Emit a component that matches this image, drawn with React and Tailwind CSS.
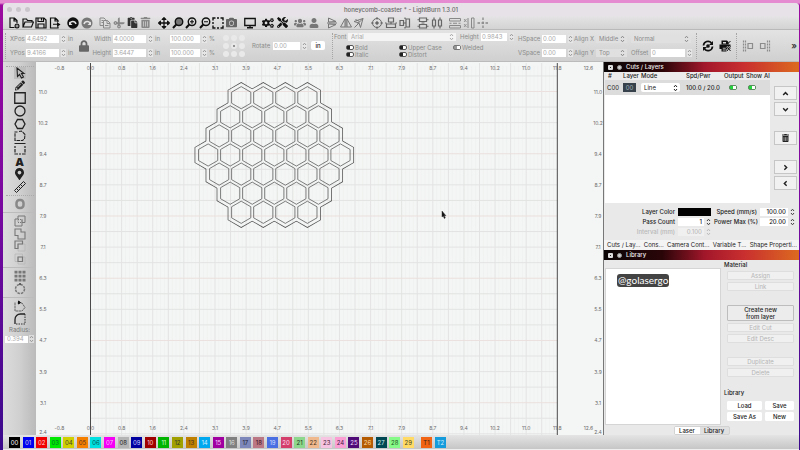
import clsx from 'clsx'
import {
  FaArrowsAlt, FaCamera, FaCogs, FaCut, FaLock, FaMapMarkerAlt, FaPaste,
  FaPencilAlt, FaTools, FaTrashAlt, FaUser, FaUsers,
} from 'react-icons/fa'

function Svg({ children, className, width = 2 }) {
  return (
    <svg viewBox="0 0 24 24" fill="none" stroke="currentColor" strokeWidth={width} className={clsx('block', className || 'w-3 h-3')} aria-hidden="true">
      {children}
    </svg>
  )
}

const NewIcon = () => <Svg width={2.4}><path d="M13 21H4V2h9l5 5v5M12 2v6h6" /><circle cx="18" cy="18" r="5" fill="currentColor" stroke="none" /><path d="M18 15v6M15 18h6" stroke="#e4e4e4" strokeWidth="1.6" /></Svg>
const OpenIcon = () => <Svg width={2.4}><path d="M2 20V4h7l2 3h9v3M2 20L6 10h17l-4 10z" /></Svg>
const SaveIcon = () => <Svg width={2.4}><path d="M2 2h16l4 4v16H2zM6 2v7h11V2M6 22v-8h12v8M13 3v4" /></Svg>
const ImportIcon = () => <Svg width={2.4}><path d="M18 10V7l-5-5H3v20h15v-3M12 2v6h6M8 14.500h9" /><path d="M16 10l7 5-7 5z" fill="currentColor" stroke="none" /></Svg>
const UndoIcon = () => <Svg><circle cx="12" cy="12" r="11.500" fill="currentColor" stroke="none" /><path d="M6 13c1-5 10-6 12 1" stroke="#e4e4e4" strokeWidth="3" /><path d="M4 9v7h7z" fill="#e4e4e4" stroke="none" /></Svg>
const RedoIcon = () => <Svg><circle cx="12" cy="12" r="11" fill="currentColor" stroke="none" /><path d="M18 13C17 8 8 7 6 14" stroke="#e4e4e4" strokeWidth="3" /><path d="M20 9v7h-7z" fill="#e4e4e4" stroke="none" /></Svg>
const CopyIcon = () => <Svg><path d="M9 17H2V2h8l3 3v3M9 7h8l5 5v10H9zM16 7v6h6M5 7h3M5 11h3M12 17h7" /></Svg>
const MoveIcon = () => <FaArrowsAlt className="w-3 h-3" />

function Magnifier({ sign, dark }) {
  return (
    <Svg width={2.8}>
      <circle cx="14" cy="9.500" r="7.500" fill={dark ? '#777' : 'none'} />
      <path d="M8.500 15L2 22" strokeWidth="4" />
      {sign && <path d={sign} strokeWidth="2.400" />}
    </Svg>
  )
}

const FrameIcon = () => <Svg width={2.8}><path d="M2 7V2h5M17 2h5v5M22 17v5h-5M7 22H2v-5M10 2h4M10 22h4M2 10v4M22 10v4" /></Svg>
const MonitorIcon = () => <Svg width={2.6}><path d="M1.500 3h21v14h-21zM12 17v5M6 21.500h12" /></Svg>
const FlipVIcon = () => <Svg><path d="M5 2v8l15-1zM5 22v-8l15 1zM2 12h20" /></Svg>
const FlipHIcon = () => <Svg><path d="M10 4v16H1zM14 4v16h9zM12 2v20" /></Svg>
const MirrorIcon = () => <Svg><path d="M2 9l18-6-5 18-3-9zM12 12L3 21M5 5l8 4M20 3L9 14" /></Svg>
const TargetIcon = () => <Svg><circle cx="12" cy="12" r="9" /><circle cx="12" cy="12" r="2.500" fill="currentColor" /><path d="M12 0v5M12 19v5M0 12h5M19 12h5" /></Svg>
const AlignVIcon = () => <Svg width={2.4}><path d="M7 2h10v8H7zM3 14h18v7H3zM12 10v4M0 12h3M21 12h3" /></Svg>
const AlignHIcon = () => <Svg width={2.4}><path d="M2 7h7v10H2zM14 4h7v16h-7zM9 12h5M12 1v3M12 20v3" /></Svg>
const DistVIcon = () => <Svg width={2.4}><path d="M5 2h14v7H5zM5 15h14v7H5zM1 5.500h4M19 5.500h4M1 18.500h4M19 18.500h4M9 12h6" /></Svg>
const DistHIcon = () => <Svg width={2.4}><path d="M3 6h6v12H3zM15 6h6v12h-6zM6 1v5M6 18v5M18 1v5M18 18v5" /></Svg>
const SpreadVIcon = () => <Svg><path d="M1 3h22v5H1zM1 17h22v5H1zM1 12.500h4M8 12.500h8M19 12.500h4" /></Svg>
const SpreadHIcon = () => <Svg><path d="M17 2h5v20h-5zM10 2v20" /><path d="M2 4l5 6M7 4l-5 6M2 14l5 6M7 14l-5 6" strokeWidth="1.600" /></Svg>
const CrossIcon = () => <Svg width={2.6}><path d="M12 1v22M1 12h22" strokeDasharray="5 3" /></Svg>

const toolbarGroups = [
  { width: 'w-[53px]', icons: [['New', NewIcon], ['Open', OpenIcon], ['Save', SaveIcon], ['Import', ImportIcon]] },
  { width: 'w-[26px]', icons: [['Undo', UndoIcon], ['Redo', RedoIcon, 'text-[#777]']] },
  {
    width: 'w-[53px]',
    icons: [
      ['Copy', CopyIcon, 'text-[#888]'],
      ['Cut', () => <FaCut className="w-[10px] h-[10px] -rotate-45" />, 'text-[#888]'],
      ['Paste', () => <FaPaste className="w-[11px] h-[11px]" />, 'text-[#333]'],
      ['Delete', () => <FaTrashAlt className="w-[11px] h-[11px]" />, 'text-[#888]'],
    ],
  },
  {
    width: 'w-[80px]',
    icons: [
      ['Pan', MoveIcon],
      ['Zoom to page', () => <Magnifier dark />],
      ['Zoom in', () => <Magnifier sign="M10 9.500h8M14 5.500v8" />],
      ['Zoom out', () => <Magnifier sign="M10 9.500h8" />],
      ['Frame selection', FrameIcon],
      ['Camera', () => <FaCamera className="w-[11px] h-[11px]" />, 'text-[#666]'],
    ],
  },
  { width: 'w-3', icons: [['Preview', MonitorIcon]] },
  {
    width: 'w-[26px]',
    icons: [
      ['Settings', () => <FaCogs className="w-3 h-3" />],
      ['Device settings', () => <FaTools className="w-[11px] h-[11px]" />],
    ],
  },
  {
    width: 'w-[26px]',
    icons: [
      ['Group', () => <FaUsers className="w-3 h-3" />, 'text-[#777]'],
      ['Ungroup', () => <FaUser className="w-[10px] h-[10px]" />, 'text-[#777]'],
    ],
  },
  { width: 'w-[39px]', icons: [['Flip vertical', FlipVIcon, 'text-[#777]'], ['Flip horizontal', FlipHIcon, 'text-[#777]'], ['Mirror', MirrorIcon, 'text-[#777]']] },
  { width: 'w-[40px]', icons: [['Center', TargetIcon, 'text-[#666]'], ['Align vertical', AlignVIcon, 'text-[#666]'], ['Align horizontal', AlignHIcon, 'text-[#666]']] },
  { width: 'w-[26px]', icons: [['Distribute vertical', DistVIcon, 'text-[#666]'], ['Distribute horizontal', DistHIcon, 'text-[#666]']] },
  { width: 'w-[40px]', icons: [['Space vertical', SpreadVIcon, 'text-[#888]'], ['Space horizontal', SpreadHIcon, 'text-[#888]'], ['Move together', CrossIcon, 'text-[#888]']] },
]

function IconButton({ label, className, children }) {
  return (
    <button type="button" aria-label={label} className={clsx('flex items-center justify-center w-3 h-3 shrink-0', className)}>
      {children}
    </button>
  )
}

function Toolbar() {
  return (
    <div className="flex items-center gap-[6px] h-[14px] shrink-0 pl-[5px] bg-gradient-to-b from-[#e6e4e6] to-[#d2d3d2] border-b border-[#b9b9b9]">
      {toolbarGroups.map((group, i) => (
        <div key={i} className={clsx('flex justify-between shrink-0', group.width)}>
          {group.icons.map(([label, Icon, color]) => (
            <IconButton key={label} label={label} className={color || 'text-[#111]'}><Icon /></IconButton>
          ))}
        </div>
      ))}
    </div>
  )
}

function Stepper({ className }) {
  return (
    <svg viewBox="0 0 5 8" fill="none" stroke="currentColor" strokeWidth="1" className={clsx('w-[5px] h-2 shrink-0', className)} aria-hidden="true">
      <path d="M1 3l1.500-1.800L4 3M1 5l1.500 1.800L4 5" />
    </svg>
  )
}

function Field({ label, value, unit, labelClass, inputClass, name }) {
  return (
    <label className="flex items-center gap-[2px] h-2 shrink-0">
      {label && <span className={clsx('shrink-0 whitespace-nowrap', labelClass)}>{label}</span>}
      <input aria-label={name} defaultValue={value} className={clsx('h-2 px-px bg-white text-[#a9a9a9] outline-none', inputClass)} />
      <Stepper className="text-[#999] bg-[#e6e6e6]" />
      {unit && <span className="w-[7px]">{unit}</span>}
    </label>
  )
}

function Picker({ label, name, value, labelClass, boxClass }) {
  return (
    <label className="flex items-center gap-[2px] shrink-0">
      {label && <span className={clsx('shrink-0 whitespace-nowrap', labelClass)}>{label}</span>}
      <span className={clsx('relative flex items-center', boxClass)}>
        <select aria-label={name || label} defaultValue={value} className="appearance-none w-full h-full pl-[3px] pr-2 rounded-[2px] bg-transparent outline-none">
          <option>{value}</option>
        </select>
        <Stepper className="absolute right-[2px] pointer-events-none" />
      </span>
    </label>
  )
}

function Toggle({ label, on, active }) {
  return (
    <label className="flex items-center gap-px h-[7px] whitespace-nowrap">
      <input type="checkbox" defaultChecked={on} aria-label={label} className="sr-only" />
      <span className={clsx('flex w-2 h-[5px] rounded-[2px] border', active ? 'justify-end bg-[#22d63c] border-[#5a8a5e]' : on ? 'justify-end bg-[#999] border-[#777]' : 'bg-white border-[#555]')}>
        <span className={clsx('w-[3px] h-full', active || on ? 'bg-white' : 'bg-[#222]')} />
      </span>
      {!active && label}
    </label>
  )
}

const Dots = () => <div className="w-px h-[26px] border-l border-dotted border-[#a5a5a5] shrink-0" />

function AnchorGrid() {
  return (
    <div role="radiogroup" aria-label="Anchor" className="grid grid-cols-3 gap-[2px] shrink-0">
      {Array.from({ length: 9 }, (_, i) => (
        <input key={i} type="radio" name="anchor" aria-label={`Anchor ${i + 1}`} defaultChecked={i === 4} className="appearance-none w-[6px] h-[6px] rounded-full bg-[#e9e9e9] checked:border-2 checked:border-[#e9e9e9] checked:bg-[#777]" />
      ))}
    </div>
  )
}

function PropertiesBar() {
  return (
    <div className="flex items-center h-8 shrink-0 px-[2px] overflow-hidden bg-gradient-to-b from-[#e2e3e2] to-[#cfd0cf] text-[#8b8b8b] border-b border-[#bbb]">
      <Dots />
      <div className="flex flex-col gap-[6px] ml-1">
        <Field label="XPos" value="4.6492" unit="in" labelClass="w-[14px]" inputClass="w-[33px]" />
        <Field label="YPos" value="9.4166" unit="in" labelClass="w-[14px]" inputClass="w-[33px]" />
      </div>
      <FaLock className="w-[10px] h-3 ml-1 mr-[2px] text-[#666] shrink-0" />
      <div className="flex flex-col gap-[6px]">
        <Field label="Width" value="4.0000" unit="in" labelClass="w-[20px] text-right" inputClass="w-[33px]" />
        <Field label="Height" value="3.6447" unit="in" labelClass="w-[20px] text-right" inputClass="w-[33px]" />
      </div>
      <div className="flex flex-col gap-[6px] ml-2">
        <Field name="Width percent" value="100.000" unit="%" inputClass="w-[30px]" />
        <Field name="Height percent" value="100.000" unit="%" inputClass="w-[30px]" />
      </div>
      <div className="ml-[7px]"><AnchorGrid /></div>
      <div className="ml-[7px]">
        <Field label="Rotate" value="0.00" labelClass="w-[19px]" inputClass="w-[27px]" />
      </div>
      <button type="button" className="w-[14px] h-[9px] ml-1 rounded-[2px] bg-white text-[#222] font-medium shrink-0">in</button>
      <div className="ml-[7px]"><Dots /></div>
      <div className="flex flex-col ml-px shrink-0">
        <div className="flex items-center gap-1">
          <Picker label="Font" value="Arial" labelClass="w-3" boxClass="w-[108px] h-2 bg-[#f4f4f4] text-[#a9a9a9]" />
          <Field label="Height" value="0.9843" labelClass="w-[19px]" inputClass="w-[26px]" />
        </div>
        <div className="grid grid-cols-[53px_54px_auto] ml-3 mt-[3px]">
          <Toggle label="Bold" />
          <Toggle label="Upper Case" />
          <Toggle label="Welded" on />
          <Toggle label="Italic" />
          <Toggle label="Distort" />
        </div>
      </div>
      <div className="flex flex-col gap-[6px] ml-1">
        <Field label="HSpace" value="0.00" labelClass="w-[22px] text-right" inputClass="w-[24px]" />
        <Field label="VSpace" value="0.00" labelClass="w-[22px] text-right" inputClass="w-[24px]" />
      </div>
      <div className="flex flex-col gap-[6px] ml-px">
        <Picker label="Align X" value="Middle" labelClass="w-[20px]" boxClass="w-[31px] h-2 bg-[#e0e0e0]" />
        <Picker label="Align Y" value="Top" labelClass="w-[20px]" boxClass="w-[31px] h-2 bg-[#e0e0e0]" />
      </div>
      <div className="flex flex-col gap-[6px] ml-1">
        <Picker name="Text mode" value="Normal" boxClass="w-[60px] h-2 bg-[#e0e0e0]" />
        <Field label="Offset" value="0" labelClass="w-[18px]" inputClass="w-[34px]" />
      </div>
      <div className="flex items-center gap-[5px] ml-1 text-[#111]">
        <Dots />
        <IconButton label="Refresh">
          <Svg width={3.4}><path d="M3 11a9 9 0 0116-5M21 13a9 9 0 01-16 5" /><path d="M22 2v8h-8zM2 22v-8h8z" fill="currentColor" stroke="none" /><circle cx="12" cy="12" r="2" fill="currentColor" /></Svg>
        </IconButton>
        <IconButton label="Laser print">
          <Svg><path d="M5 1h11l3 3v5H5z" fill="currentColor" stroke="none" /><path d="M8 4h6v3H8z" fill="#ddd" stroke="none" /><path d="M1 9h22v9H1z" fill="currentColor" stroke="none" /><path d="M5 14h10v9H5z" fill="currentColor" stroke="none" /><path d="M7.500 16.500h6M7.500 20h6" stroke="#ddd" strokeWidth="1.600" /><path d="M16 13l7 9M23 13l-7 9" stroke="#ddd" strokeWidth="4" /><path d="M16 13l7 9M23 13l-7 9M17 8l6-6" /></Svg>
        </IconButton>
        <Dots />
        <IconButton label="Dock left" className="text-[#8c8c8c]"><Svg width={2.4}><path d="M3 1v22M7 1v22" strokeDasharray="4 2" /><path d="M12 7h9v10h-9z" /></Svg></IconButton>
        <IconButton label="Dock right" className="text-[#8c8c8c]"><Svg width={2.4}><path d="M21 1v22M17 1v22" strokeDasharray="4 2" /><path d="M3 7h9v10H3z" /></Svg></IconButton>
      </div>
      <button type="button" aria-label="More" className="ml-auto text-[9px] leading-[9px] font-semibold text-[#333]">»</button>
    </div>
  )
}

const drawTools = [
  ['Select', <Svg width={2.2}><path d="M0 0h24v24H0z" fill="#bdbdbd" stroke="none" /><path d="M6 2l1 17 4-4 4 7 4-2-4-7h5z" /></Svg>],
  ['Draw lines', <FaPencilAlt className="w-[10px] h-[11px]" />],
  ['Rectangle', <Svg width={2.6}><path d="M1.500 1.500h21v21h-21z" /></Svg>],
  ['Ellipse', <Svg width={2.6}><circle cx="12" cy="12" r="10" /></Svg>],
  ['Polygon', <Svg width={2.6}><path d="M7 3h10l5 9-5 9H7l-5-9z" /></Svg>],
  ['Edit nodes', <Svg width={2.2}><path d="M2 22V4h5M10 3l5-1 7 7-1 9-4 3H2" strokeDasharray="7 1.500" /></Svg>],
  ['Tabs', <Svg width={2.4}><path d="M1 1h22" /><path d="M8 22H2V6M16 22h6V6M10 22h4" strokeDasharray="7 2" /></Svg>],
  ['Text', <span className="font-black text-[11px] leading-[12px]">A</span>],
  ['Position laser', <FaMapMarkerAlt className="w-[9px] h-3" />],
  ['Measure', <Svg width={2}><path d="M1 19L19 1l4 4L5 23zM6 18l2-2M10 14l2-2M14 10l2-2" /></Svg>],
]

const boolTools = [
  ['Weld', <Svg><path d="M8 8V2h14v13h-6v7H2V8zM16 9v6" /><path d="M8 9h8v6H8z" strokeDasharray="2 2" /></Svg>],
  ['Union', <Svg width={2.2}><path d="M2 2h12v6h8v14H8v-7H2z" /></Svg>],
  ['Subtract', <Svg width={2.4}><path d="M8 8h14v14H8z" stroke="#b5b5b5" strokeWidth="1.500" /><path d="M2 2h15v6H8v9H2z" /></Svg>],
  ['Intersection', <Svg width={2.4}><path d="M2 2h15v15H2zM8 8h14v14H8z" stroke="#b5b5b5" strokeWidth="1.500" /><path d="M8 8h9v9H8z" /></Svg>],
]

const Rule = () => <div className="w-full h-px bg-[#bcbcbc]" />

function ToolColumn() {
  return (
    <div className="flex flex-col items-center w-[33px] shrink-0 text-[#222] bg-gradient-to-r from-[#dcdcdc] via-[#d0d0d0] to-[#bababa]">
      <div className="w-7 mt-1 border-t border-dotted border-[#aaa]" />
      <div className="flex flex-col justify-between h-[126px]">
        {drawTools.map(([label, icon]) => <IconButton key={label} label={label}>{icon}</IconButton>)}
      </div>
      <div className="w-7 my-[2px] border-t border-dotted border-[#aaa]" />
      <IconButton label="Offset" className="text-[#888]">
        <Svg width={5}><rect x="5" y="4" width="14" height="16" rx="6" /></Svg>
      </IconButton>
      <div className="w-full mt-[2px]"><Rule /></div>
      <div className="flex flex-col justify-between h-[50px] my-[2px] text-[#777]">
        {boolTools.map(([label, icon]) => <IconButton key={label} label={label}>{icon}</IconButton>)}
      </div>
      <Rule />
      <div className="flex flex-col gap-px my-[2px] text-[#777]">
        <IconButton label="Grid array">
          <Svg><path d="M1 4h22M1 12h22M1 20h22" strokeWidth="5.500" strokeDasharray="6 2" /></Svg>
        </IconButton>
        <IconButton label="Circular array">
          <Svg width={3}><circle cx="12" cy="12" r="9" strokeDasharray="5 2" /><path d="M12 0v4" stroke="#444" /></Svg>
        </IconButton>
      </div>
      <Rule />
      <div className="flex flex-col gap-px mt-[2px]">
        <IconButton label="Start point" className="text-[#666]">
          <Svg><path d="M2 5v17h14l6-7-6-9H6" strokeDasharray="5 1" /><path d="M9 2l4 3-4 3z" fill="#111" stroke="#111" /></Svg>
        </IconButton>
        <IconButton label="Round corners">
          <Svg width={2.6}><path d="M2 22V13C2 6 7 2 13 2h9" /><path d="M22 2v20H2" strokeDasharray="3 2" strokeWidth="1.800" /></Svg>
        </IconButton>
      </div>
      <label className="flex flex-col items-center w-full mt-px text-[#777]">
        <span className="h-[9px]">Radius:</span>
        <span className="flex items-center gap-px">
          <input defaultValue="0.394" className="w-[23px] h-[7px] px-[2px] bg-white text-[#aaa] outline-none" />
          <Stepper className="text-[#999] bg-[#ddd]" />
        </span>
      </label>
    </div>
  )
}

// Canvas geometry, in canvas units
const ORIGIN_X = 54.5
const CELL = 15.56
const BED_RIGHT = ORIGIN_X + CELL * 30
const FIRST_ROW = 29.5
const HEIGHT = 373

const xTicks = ['-0.8', '0.0', '0.8', '1.6', '2.4', '3.1', '3.9', '4.7', '5.5', '6.3', '7.1', '7.9', '8.7', '9.4', '10.2', '11.0', '11.8', '12.6']
const yTicks = ['11.0', '10.2', '9.4', '8.7', '7.9', '7.1', '6.3', '5.5', '4.7', '3.9', '3.1', '2.4']

function hexPoints(cx, cy, apothem) {
  const r = apothem / Math.cos(Math.PI / 6)
  return Array.from({ length: 6 }, (_, i) => {
    const a = Math.PI / 6 + (i * Math.PI) / 3
    return `${(cx + r * Math.cos(a)).toFixed(2)},${(cy + r * Math.sin(a)).toFixed(2)}`
  }).join(' ')
}

const cells = [4, 5, 6, 7, 6, 5, 4].flatMap((count, row) =>
  Array.from({ length: count }, (_, i) => [
    238.3 + (i - (count - 1) / 2) * 22.06,
    93 + (row - 3) * 19.1,
  ])
)

function Canvas() {
  return (
    <svg viewBox={`0 0 567 ${HEIGHT}`} preserveAspectRatio="xMinYMin slice" className="block flex-1 min-w-0 h-full bg-[#f4f6f5]" role="img" aria-label="Workspace">
      <g stroke="#eceeed" strokeWidth="1">
        {Array.from({ length: 30 }, (_, i) => [1, 2, 3].map(k => {
          const x = ORIGIN_X + CELL * (i + k / 4)
          return <line key={`${i}-${k}`} x1={x} x2={x} y1="4" y2={HEIGHT} opacity="0.5" />
        }))}
      </g>
      <g stroke="#e2e3e2" strokeWidth="1">
        {Array.from({ length: 29 }, (_, i) => {
          const x = ORIGIN_X + CELL * (i + 1)
          return <line key={i} x1={x} x2={x} y1="1" y2={HEIGHT} />
        })}
        {Array.from({ length: 24 }, (_, i) => {
          const y = FIRST_ROW + CELL * (i - 1)
          return <line key={i} x1={ORIGIN_X} x2={BED_RIGHT} y1={y} y2={y} stroke={i % 4 === 1 ? '#ebe0dd' : undefined} />
        })}
      </g>
      <g stroke="#4a4a4a" strokeWidth="1">
        <line x1={ORIGIN_X} x2={ORIGIN_X} y1="1" y2={HEIGHT} />
        <line x1={BED_RIGHT} x2={BED_RIGHT} y1="1" y2={HEIGHT} />
      </g>

      <mask id="outside">
        <rect width="567" height={HEIGHT} fill="white" />
        {cells.map(([x, y], i) => <polygon key={i} points={hexPoints(x, y, 12.8)} fill="black" />)}
      </mask>
      <g fill="none" stroke="#505050" strokeWidth="1.5" mask="url(#outside)">
        {cells.map(([x, y], i) => <polygon key={i} points={hexPoints(x, y, 12.8)} />)}
      </g>
      <g fill="none" stroke="#5c5c5c" strokeWidth="0.8">
        {cells.map(([x, y], i) => <polygon key={i} points={hexPoints(x, y, 9.6)} />)}
      </g>

      <g fill="#6b6b6b" fontSize="5" textAnchor="middle">
        {xTicks.map((t, i) => (
          <g key={t}>
            <text x={ORIGIN_X + CELL * 2 * (i - 1)} y="8">{t}</text>
            <text x={ORIGIN_X + CELL * 2 * (i - 1)} y="368">{t}</text>
          </g>
        ))}
        {yTicks.map((t, i) => {
          const y = Math.min(FIRST_ROW + 2 + CELL * 2 * i, HEIGHT - 1)
          return (
            <g key={t}>
              <text x="7" y={y}>{t}</text>
              <text x="562" y={y}>{t}</text>
            </g>
          )
        })}
      </g>
      <path d="M406 149v6l1.300-1 1 2.500 1-.5-1-2.300h1.600z" fill="#111" stroke="#333" strokeWidth="0.5" />
    </svg>
  )
}

function PanelTitle({ children }) {
  return (
    <div className="flex items-center gap-1 h-[10px] pl-1 shrink-0 text-[#eee] bg-[linear-gradient(90deg,#0a0505_0%,#2a0508_30%,#a3172b_52%,#c92f2f_72%,#dc6a20_100%)]">
      <button type="button" aria-label="Close panel" className="flex items-center justify-center w-[5px] h-[5px] rounded-[1px] bg-[#ddd]"><span className="w-px h-px bg-[#222]" /></button>
      <button type="button" aria-label="Float panel" className="w-[5px] h-[5px] rounded-full bg-[#ccc] border border-[#999]" />
      <h2 className="font-medium">{children}</h2>
    </div>
  )
}

function SideButton({ label, children }) {
  return (
    <button type="button" aria-label={label} className="flex items-center justify-center w-full h-[14px] bg-[#f1f1f1] border border-[#c6c6c6] text-[#222]">
      {children}
    </button>
  )
}

const Chevron = ({ d }) => <Svg className="w-[7px] h-[7px]" width={5}><path d={d} /></Svg>

function SettingInput({ id, value, disabled }) {
  return (
    <span className="flex items-center gap-[2px]">
      <input id={id} defaultValue={value} disabled={disabled} className={clsx('w-full min-w-0 h-2 px-[2px] text-right outline-none', disabled ? 'bg-[#f0f0f0] text-[#bbb]' : 'bg-white text-[#222]')} />
      <Stepper className={disabled ? 'text-[#bbb]' : 'text-[#444]'} />
    </span>
  )
}

function CutsPanel() {
  return (
    <section className="flex flex-col bg-[#e9e9e9]">
      <PanelTitle>Cuts / Layers</PanelTitle>
      <div className="flex">
        <div className="flex-1 min-w-0 h-[131px] ml-px bg-white overflow-hidden">
          <table className="w-full table-fixed text-left">
            <thead className="bg-[#ececec]">
              <tr className="h-2">
                <th className="w-[16px] pl-[3px] font-medium">#</th>
                <th className="w-[18px] pl-[2px] font-medium">Layer</th>
                <th className="w-[45px] pl-[2px] font-medium">Mode</th>
                <th className="w-[40px] pl-[2px] font-medium">Spd/Pwr</th>
                <th className="w-[22px] font-medium">Output</th>
                <th className="w-[18px] font-medium">Show</th>
                <th className="font-medium">Al</th>
              </tr>
            </thead>
            <tbody>
              <tr className="h-[15px] bg-[#dcdcdc]">
                <td className="pl-[2px] whitespace-nowrap">C00</td>
                <td className="pl-[2px]"><span className="block w-[13px] h-[9px] leading-[9px] text-center text-[#9fb3bd] bg-[#37414b]">00</span></td>
                <td className="pl-[2px]"><Picker name="Mode" value="Line" boxClass="w-[39px] h-[9px] rounded-[2px] bg-white" /></td>
                <td className="pl-[2px] whitespace-nowrap font-medium">100.0 / 20.0</td>
                <td className="pl-[5px]"><Toggle label="Output" on active /></td>
                <td className="pl-[2px]"><Toggle label="Show" on active /></td>
                <td />
              </tr>
            </tbody>
          </table>
        </div>
        <div className="flex flex-col w-[23px] pt-[14px] ml-1 mr-[2px]">
          <SideButton label="Move up"><Chevron d="M4 17l8-8 8 8" /></SideButton>
          <div className="mt-[2px]"><SideButton label="Move down"><Chevron d="M4 8l8 8 8-8" /></SideButton></div>
          <div className="my-[15px]"><SideButton label="Delete layer"><FaTrashAlt className="w-[7px] h-2" /></SideButton></div>
          <SideButton label="Next"><Chevron d="M8 4l8 8-8 8" /></SideButton>
          <div className="mt-[2px]"><SideButton label="Previous"><Chevron d="M16 4l-8 8 8 8" /></SideButton></div>
        </div>
      </div>
      <div className="grid grid-cols-[1fr_33px_43px_35px] gap-x-[3px] gap-y-[2px] items-center mt-[5px] pr-1 text-right whitespace-nowrap font-medium">
        <span>Layer Color</span>
        <button type="button" aria-label="Layer Color" className="h-2 bg-black" />
        <label htmlFor="speed">Speed (mm/s)</label>
        <SettingInput id="speed" value="100.00" />
        <label htmlFor="passes">Pass Count</label>
        <SettingInput id="passes" value="1" />
        <label htmlFor="power">Power Max (%)</label>
        <SettingInput id="power" value="20.00" />
        <label htmlFor="interval" className="text-[#b8b8b8]">Interval (mm)</label>
        <SettingInput id="interval" value="0.100" disabled />
      </div>
      <div role="tablist" className="flex justify-between h-[10px] mt-1 pl-[3px] pr-[2px] whitespace-nowrap bg-[#f4f4f4]">
        {['Cuts / Lay...', 'Cons...', 'Camera Cont...', 'Variable T...', 'Shape Properti...'].map((t, i) => (
          <button key={t} type="button" role="tab" aria-selected={i === 0}>{t}</button>
        ))}
      </div>
    </section>
  )
}

function LibButton({ children, disabled, tall }) {
  return (
    <button
      type="button"
      disabled={disabled}
      className={clsx(
        'w-full border rounded-[1px] leading-[7px]',
        tall && 'h-4 px-3 bg-[#ececec] border-[#bdbdbd] text-[#222] font-medium',
        disabled && 'h-[9px] text-[#b5b5b5] bg-[#f0f0f0] border-[#dedede]',
        !tall && !disabled && 'h-[9px] bg-white border-white text-[#222] whitespace-nowrap font-medium'
      )}
    >
      {children}
    </button>
  )
}

function LibraryPanel() {
  return (
    <section className="flex flex-col flex-1 min-h-0 bg-[#e9e9e9]">
      <PanelTitle>Library</PanelTitle>
      <div className="flex flex-1 min-h-0">
        <div className="flex-1 mt-2 ml-px bg-white border border-[#d5d5d5]">
          <span className="inline-block mt-[5px] ml-[11px] px-px rounded-[3px] bg-[#434343] text-white font-['Lato'] text-[10px] leading-[13px]">@golasergo</span>
        </div>
        <div className="flex flex-col w-[78px] pl-[3px] pr-[5px]">
          <h3 className="h-[9px] leading-[9px] font-medium">Material</h3>
          <div className="flex flex-col gap-[2px] pl-[3px] mt-[2px]">
            <LibButton disabled>Assign</LibButton>
            <LibButton disabled>Link</LibButton>
            <div className="mt-3"><LibButton tall>Create new from layer</LibButton></div>
            <LibButton disabled>Edit Cut</LibButton>
            <LibButton disabled>Edit Desc</LibButton>
            <div className="mt-3"><LibButton disabled>Duplicate</LibButton></div>
            <LibButton disabled>Delete</LibButton>
          </div>
          <h3 className="h-[9px] leading-[9px] mt-[11px] font-medium">Library</h3>
          <div className="grid grid-cols-[35px_1fr] gap-x-[3px] gap-y-[2px] pl-[3px] mt-1">
            <LibButton>Load</LibButton>
            <LibButton>Save</LibButton>
            <LibButton>Save As</LibButton>
            <LibButton>New</LibButton>
          </div>
        </div>
      </div>
      <div role="tablist" className="flex self-center h-[9px] mt-px rounded-[2px] border border-[#d2d2d2] leading-[7px] bg-[#e0e0e0] font-medium">
        <button type="button" role="tab" aria-selected="true" className="w-[25px] bg-white">Laser</button>
        <button type="button" role="tab" aria-selected="false" className="w-[29px]">Library</button>
      </div>
    </section>
  )
}

const swatches = [
  ['00', 'bg-[#000000] text-white'], ['01', 'bg-[#0000f0] text-[#ccd]'], ['02', 'bg-[#f00000] text-[#fcc]'],
  ['03', 'bg-[#00e800] text-[#063]'], ['04', 'bg-[#d0d000] text-[#443]'], ['05', 'bg-[#f58000] text-[#532]'],
  ['06', 'bg-[#00e0e0] text-[#055]'], ['07', 'bg-[#f500f5] text-[#fbf]'], ['08', 'bg-[#b4b4b4] text-[#222]'],
  ['09', 'bg-[#0000a0] text-[#ccf]'], ['10', 'bg-[#a00000] text-[#fcc]'], ['11', 'bg-[#00b400] text-[#cfc]'],
  ['12', 'bg-[#a0a000] text-[#333]'], ['13', 'bg-[#c08000] text-[#432]'], ['14', 'bg-[#00a8f0] text-[#cef]'],
  ['15', 'bg-[#a000a0] text-[#fcf]'], ['16', 'bg-[#808080] text-[#ddd]'], ['17', 'bg-[#7d87b9] text-[#223]'],
  ['18', 'bg-[#bb7784] text-[#312]'], ['19', 'bg-[#4a6fe3] text-[#cdf]'], ['20', 'bg-[#d33f6a] text-[#fde]'],
  ['21', 'bg-[#8cd78c] text-[#232]'], ['22', 'bg-[#f0b98d] text-[#432]'], ['23', 'bg-[#f6c4e1] text-[#423]'],
  ['24', 'bg-[#fa9ed4] text-[#424]'], ['25', 'bg-[#500a78] text-[#edf]'], ['26', 'bg-[#b45a00] text-[#fda]'],
  ['27', 'bg-[#004754] text-[#cee]'], ['28', 'bg-[#86fa88] text-[#252]'], ['29', 'bg-[#ffdb66] text-[#442]'],
]

function Swatch({ name, color }) {
  return <button type="button" className={clsx('w-[11px] h-[11px] leading-[11px] text-center', color)}>{name}</button>
}

function Palette() {
  return (
    <div className="flex items-center h-[15px] pl-[6px] shrink-0 bg-gradient-to-b from-[#e4e4e4] to-[#c6c6c6] border-b border-[#eee]">
      <div className="flex justify-between w-[405px]">
        {swatches.map(([name, color]) => <Swatch key={name} name={name} color={color} />)}
      </div>
      <div className="flex gap-[3px] ml-[7px]">
        <Swatch name="T1" color="bg-[#f06414] text-[#421]" />
        <Swatch name="T2" color="bg-[#149bdc] text-[#cef]" />
      </div>
    </div>
  )
}

export default function App() {
  return (
    <div className="h-screen overflow-hidden pt-[3px] pl-[3px] pr-px bg-[linear-gradient(180deg,#e58bd2_0px,#e58bd2_3px,#9c0a9e_5px,#7a08a0_45%,#3a0a8c_100%)] font-['Inter','Liberation_Sans',sans-serif] text-[6px] leading-[8px] text-[#222]">
      <div className="flex flex-col h-full rounded-t-[4px] overflow-hidden bg-[#d8d8d8]">
        <header className="relative flex items-center justify-center h-[13px] shrink-0 bg-[#e7e2e7] text-[#666]">
          <div className="absolute left-1 flex gap-1">
            {['Close', 'Minimize', 'Zoom'].map(name => (
              <button key={name} type="button" aria-label={name} className="w-[5px] h-[5px] rounded-full bg-[#cbc6cb]" />
            ))}
          </div>
          <h1 className="font-medium">honeycomb-coaster * - LightBurn 1.3.01</h1>
        </header>
        <Toolbar />
        <PropertiesBar />
        <main className="flex flex-1 min-h-0">
          <ToolColumn />
          <Canvas />
          <aside className="flex flex-col w-[196px] shrink-0 border-l border-[#777]">
            <CutsPanel />
            <LibraryPanel />
          </aside>
        </main>
        <Palette />
      </div>
    </div>
  )
}
